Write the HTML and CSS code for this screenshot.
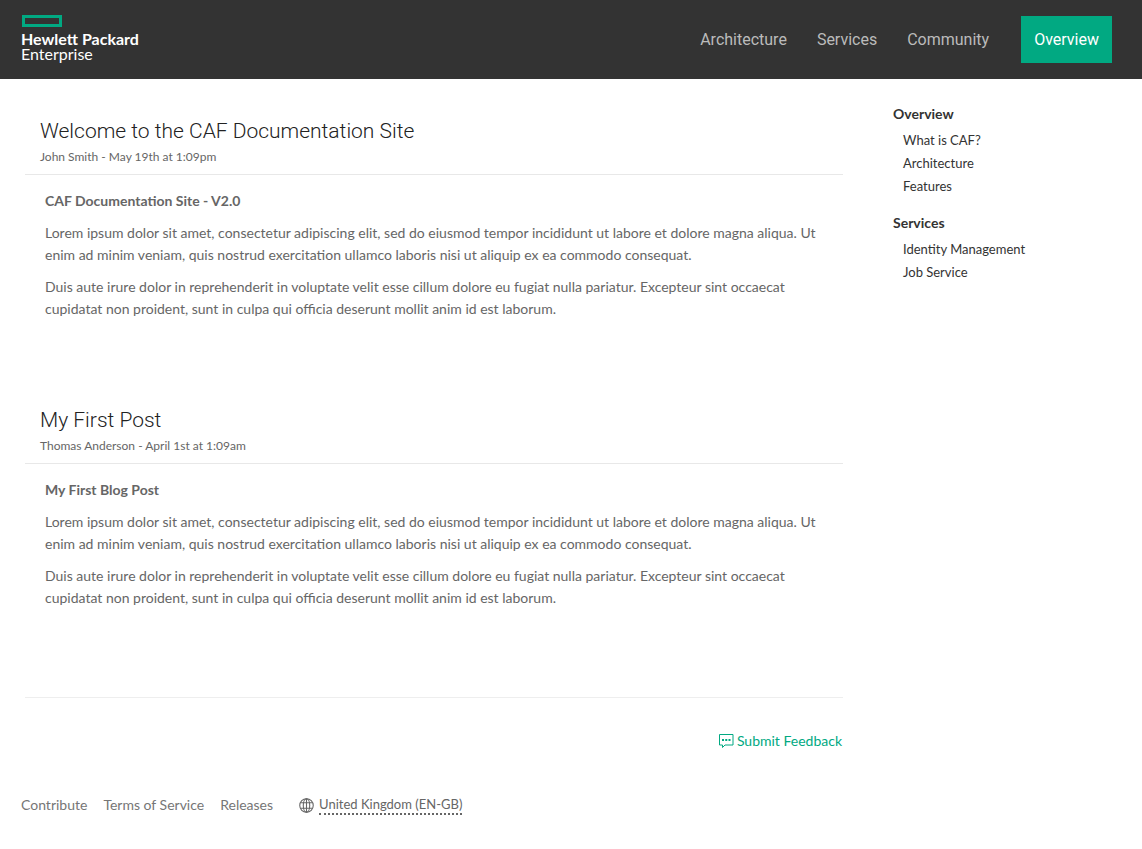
FILE: index.html
```html
<!DOCTYPE html>
<html lang="en-GB">
<head>
<meta charset="utf-8">
<meta name="viewport" content="width=device-width, initial-scale=1">
<title>CAF Documentation Site</title>
<link rel="stylesheet" href="styles.css">
</head>
<body>
<header class="site-header">
  <a class="brand" href="#">
    <span class="brand-mark"></span>
    <span class="brand-name">Hewlett Packard</span>
    <span class="brand-sub">Enterprise</span>
  </a>
  <nav class="main-nav" aria-label="Main">
    <a href="#">Architecture</a>
    <a href="#">Services</a>
    <a href="#">Community</a>
    <a class="active" href="#">Overview</a>
  </nav>
</header>
<div class="page">
  <main class="content">
    <article class="post">
      <header class="post-header">
        <h1 class="post-title">Welcome to the CAF Documentation Site</h1>
        <p class="post-meta">John Smith - May 19th at 1:09pm</p>
      </header>
      <div class="post-body">
        <h2>CAF Documentation Site - V2.0</h2>
        <p>Lorem ipsum dolor sit amet, consectetur adipiscing elit, sed do eiusmod tempor incididunt ut labore et dolore magna aliqua. Ut enim ad minim veniam, quis nostrud exercitation ullamco laboris nisi ut aliquip ex ea commodo consequat.</p>
        <p>Duis aute irure dolor in reprehenderit in voluptate velit esse cillum dolore eu fugiat nulla pariatur. Excepteur sint occaecat cupidatat non proident, sunt in culpa qui officia deserunt mollit anim id est laborum.</p>
      </div>
    </article>
    <article class="post">
      <header class="post-header">
        <h1 class="post-title">My First Post</h1>
        <p class="post-meta">Thomas Anderson - April 1st at 1:09am</p>
      </header>
      <div class="post-body">
        <h2>My First Blog Post</h2>
        <p>Lorem ipsum dolor sit amet, consectetur adipiscing elit, sed do eiusmod tempor incididunt ut labore et dolore magna aliqua. Ut enim ad minim veniam, quis nostrud exercitation ullamco laboris nisi ut aliquip ex ea commodo consequat.</p>
        <p>Duis aute irure dolor in reprehenderit in voluptate velit esse cillum dolore eu fugiat nulla pariatur. Excepteur sint occaecat cupidatat non proident, sunt in culpa qui officia deserunt mollit anim id est laborum.</p>
      </div>
    </article>
    <div class="feedback">
      <a href="#">
        <svg width="15" height="15" viewBox="0 0 15 15" fill="none" stroke="currentColor" aria-hidden="true">
          <path d="M.5 .5h13.500v10.500H6l-2.500 2.500v-2.500h-3z"/>
          <path d="M3 6h2M6.250 6h2M9.500 6h2" stroke-width="2"/>
        </svg>
        <span>Submit Feedback</span>
      </a>
    </div>
  </main>
  <aside class="sidebar">
    <nav aria-label="Documentation">
      <h2>Overview</h2>
      <ul>
        <li><a href="#">What is CAF?</a></li>
        <li><a href="#">Architecture</a></li>
        <li><a href="#">Features</a></li>
      </ul>
      <h2>Services</h2>
      <ul>
        <li><a href="#">Identity Management</a></li>
        <li><a href="#">Job Service</a></li>
      </ul>
    </nav>
  </aside>
</div>
<footer class="site-footer">
  <a href="#">Contribute</a>
  <a href="#">Terms of Service</a>
  <a href="#">Releases</a>
  <a class="locale" href="#">
    <svg width="15" height="15" viewBox="0 0 14 14" fill="none" stroke="currentColor" aria-hidden="true">
      <circle cx="7" cy="7" r="6.300"/>
      <ellipse cx="7" cy="7" rx="3" ry="6.300"/>
      <path d="M7 .7v12.600M1.500 4.500h11M1.500 9.500h11"/>
    </svg>
    <span>United Kingdom (EN-GB)</span>
  </a>
</footer>
</body>
</html>
```
FILE: styles.css
```css
* {
  box-sizing: border-box;
}

body {
  margin: 0;
  background: #fff;
  color: #666;
  font-family: Lato, "Open Sans", sans-serif;
  font-size: 14px;
  line-height: 22px;
}

h1, h2, p, ul {
  margin: 0;
  padding: 0;
}

ul {
  list-style: none;
}

a {
  color: inherit;
  text-decoration: none;
}

.site-header {
  display: flex;
  justify-content: space-between;
  padding: 15px 30px 16px 21px;
  background: #333;
}

.brand {
  display: flex;
  flex-direction: column;
  color: #fff;
  font-size: 16px;
  line-height: 15px;
}

.brand-mark {
  width: 40px;
  height: 12px;
  margin: 0 0 4px 1px;
  border: 3px solid #01a982;
}

.brand-name {
  font-weight: 700;
}

.main-nav {
  display: flex;
  align-items: center;
  gap: 30px;
  color: #bbb;
  font-family: Roboto, sans-serif;
  font-size: 16px;
  line-height: 47px;
}

.main-nav .active {
  margin: 1px 0 0 2px;
  padding: 0 13px;
  background: #01a982;
  color: #fff;
}

.page {
  display: grid;
  grid-template-columns: 1fr 224px;
  gap: 50px;
  padding: 23px 25px 0;
}

.post {
  padding-bottom: 72px;
}

.post-header {
  padding: 14px 15px 7px;
  border-bottom: 1px solid #e8e8e8;
}

.post-title {
  color: #222;
  font-family: Roboto, sans-serif;
  font-size: 21px;
  font-weight: 300;
  line-height: 31px;
}

.post-meta {
  font-size: 12px;
  line-height: 20px;
}

.post-body {
  display: grid;
  gap: 10px;
  padding: 15px 20px 0;
}

.post + .post .post-header {
  padding-top: 13px;
}

.post-body h2 {
  font-size: 14px;
  line-height: 22px;
}

.feedback {
  display: flex;
  justify-content: flex-end;
  margin-top: 16px;
  padding: 32px 1px 0 0;
  border-top: 1px solid #eee;
  color: #01a982;
}

.feedback a,
.locale {
  display: flex;
  align-items: center;
  gap: 3px;
}

.sidebar {
  color: #333;
  font-size: 13px;
  line-height: 23px;
}

.sidebar h2 {
  margin-bottom: 4px;
  font-size: 14px;
  line-height: 23px;
}

.sidebar ul {
  padding: 0 0 13px 10px;
}

.site-footer {
  display: flex;
  gap: 16px;
  padding: 42px 21px 32px;
  color: #767676;
}

.locale {
  gap: 5px;
  margin-left: 10px;
  color: #666;
  font-size: 13px;
}

.locale span {
  border-bottom: 2px dotted #666;
  line-height: 17px;
}
```
